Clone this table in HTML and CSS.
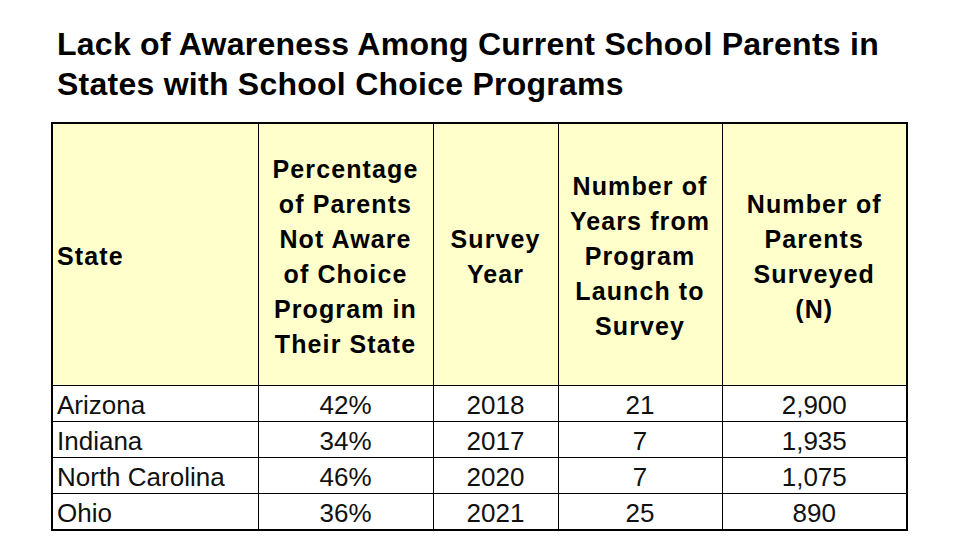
FILE: index.html
```html
<!DOCTYPE html>
<html lang="en">
<head>
<meta charset="utf-8">
<title>Lack of Awareness Among Current School Parents</title>
<link rel="stylesheet" href="styles.css">
</head>
<body>
<main class="page">
  <h1 class="title">Lack of Awareness Among Current School Parents in<br>States with School Choice Programs</h1>
  <table class="data">
    <colgroup>
      <col class="c1"><col class="c2"><col class="c3"><col class="c4"><col class="c5">
    </colgroup>
    <thead>
      <tr>
        <th class="left">State</th>
        <th>Percentage<br>of Parents<br>Not Aware<br>of Choice<br>Program in<br>Their State</th>
        <th>Survey<br>Year</th>
        <th>Number of<br>Years from<br>Program<br>Launch to<br>Survey</th>
        <th>Number of<br>Parents<br>Surveyed<br>(N)</th>
      </tr>
    </thead>
    <tbody>
      <tr><td class="left">Arizona</td><td>42%</td><td>2018</td><td>21</td><td>2,900</td></tr>
      <tr><td class="left">Indiana</td><td>34%</td><td>2017</td><td>7</td><td>1,935</td></tr>
      <tr><td class="left">North Carolina</td><td>46%</td><td>2020</td><td>7</td><td>1,075</td></tr>
      <tr><td class="left">Ohio</td><td>36%</td><td>2021</td><td>25</td><td>890</td></tr>
    </tbody>
  </table>
</main>
</body>
</html>
```
FILE: styles.css
```css
html, body {
  margin: 0;
  padding: 0;
  background: #ffffff;
}

.page {
  padding: 24px 0 0 51px;
  font-family: "Liberation Sans", Arial, sans-serif;
  color: #000;
}

.title {
  margin: 0 0 18px 6px;
  font-size: 32px;
  line-height: 40px;
  font-weight: bold;
  letter-spacing: 0.25px;
}

.data {
  border-collapse: collapse;
  table-layout: fixed;
  width: 855px;
  border: 2px solid #000;
}

.c1 { width: 206px; }
.c2 { width: 175px; }
.c3 { width: 125px; }
.c4 { width: 164px; }
.c5 { width: 185px; }

.data th,
.data td {
  border: 1px solid #000;
  padding: 0 4px;
  text-align: center;
  vertical-align: middle;
}

.data th {
  background: #ffffcc;
  height: 257px;
  padding-top: 4px;
  font-size: 25px;
  line-height: 35px;
  font-weight: bold;
  letter-spacing: 1.1px;
}

.data td {
  padding-top: 3px;
  font-size: 26px;
  line-height: 32px;
  color: #111;
}

.data .left {
  text-align: left;
  padding-left: 4px;
}
```
